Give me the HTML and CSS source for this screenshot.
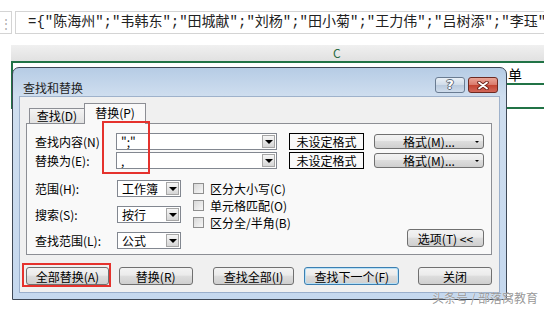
FILE: index.html
```html
<!DOCTYPE html>
<html lang="zh-CN">
<head>
    <meta charset="UTF-8">
    <meta name="viewport" content="width=device-width, initial-scale=1.0">
    <title>查找和替换</title>
    <link rel="stylesheet" href="styles.css">
</head>
<body>
    <!-- 编辑栏 -->
    <div class="formula-row">
        <div class="name-box">⋮</div>
        <div class="formula-box">={"陈海州";"韦韩东";"田城献";"刘杨";"田小菊";"王力伟";"吕树添";"李珏"}</div>
    </div>

    <div class="col-header"><span class="col-c">C</span></div>

    <div class="sheet">
        <div class="sheet-row first"><span class="cell-text">单</span></div>
        <div class="sheet-row second"></div>

        <!-- 对话框 -->
        <div class="dialog">
            <div class="title-bar">
                <span class="title">查找和替换</span>
                <div class="title-btns">
                    <button class="tb-btn help">?</button>
                    <button class="tb-btn close">
                        <svg width="12" height="9" viewBox="0 0 12 9">
                            <path d="M2 1.5 L10 7.5 M10 1.5 L2 7.5" stroke="#6b2118" stroke-width="3.6" stroke-linecap="round"/>
                            <path d="M2 1.5 L10 7.5 M10 1.5 L2 7.5" stroke="#fff" stroke-width="1.8" stroke-linecap="round"/>
                        </svg>
                    </button>
                </div>
            </div>

            <div class="client">
                <div class="tabs">
                    <div class="tab">查找(D)</div>
                    <div class="tab active">替换(P)</div>
                </div>

                <div class="panel">
                    <div class="field-row">
                        <label class="field-label">查找内容(N)</label>
                        <div class="combo wide"><span class="combo-text">";"</span><span class="drop"></span></div>
                        <div class="fmt-state">未设定格式</div>
                        <div class="btn fmt-btn">格式(M)...<span class="mini-drop"></span></div>
                    </div>
                    <div class="field-row">
                        <label class="field-label">替换为(E):</label>
                        <div class="combo wide"><span class="combo-text">,</span><span class="drop"></span></div>
                        <div class="fmt-state">未设定格式</div>
                        <div class="btn fmt-btn">格式(M)...<span class="mini-drop"></span></div>
                    </div>

                    <div class="options">
                        <div class="opt-grid">
                            <label>范围(H):</label>
                            <div class="combo small"><span class="combo-text">工作簿</span><span class="drop"></span></div>
                            <label>搜索(S):</label>
                            <div class="combo small"><span class="combo-text">按行</span><span class="drop"></span></div>
                            <label>查找范围(L):</label>
                            <div class="combo small"><span class="combo-text">公式</span><span class="drop"></span></div>
                        </div>
                        <div class="checks">
                            <div class="check"><span class="box"></span>区分大小写(C)</div>
                            <div class="check"><span class="box"></span>单元格匹配(O)</div>
                            <div class="check"><span class="box"></span>区分全/半角(B)</div>
                        </div>
                        <div class="btn opt-btn">选项(T) &lt;&lt;</div>
                    </div>
                </div>

                <div class="actions">
                    <div class="btn act-all">全部替换(A)</div>
                    <div class="btn act-replace">替换(R)</div>
                    <div class="btn act-findall">查找全部(I)</div>
                    <div class="btn act-next default">查找下一个(F)</div>
                    <div class="btn act-close">关闭</div>
                </div>
            </div>

            <div class="mark mark-find"></div>
            <div class="mark mark-all"></div>
        </div>

        <div class="watermark">头条号 / 部落窝教育</div>
    </div>
</body>
</html>
```

FILE: styles.css
```css
body {
    margin: 0;
    width: 544px;
    height: 309px;
    overflow: hidden;
    background: #fff;
    font-family: "Noto Sans CJK SC", sans-serif;
    color: #000;
}

/* 编辑栏 */
.formula-row {
    display: flex;
    gap: 3px;
    height: 45px;
    padding-top: 11px;
    box-sizing: border-box;
    align-items: flex-start;
}

.name-box {
    width: 12px;
    height: 23px;
    box-sizing: border-box;
    border: 1px solid #d4d4d4;
    border-left: none;
    color: #aaa;
    font-size: 12px;
    line-height: 21px;
    text-align: center;
}

.formula-box {
    flex: 1;
    height: 23px;
    box-sizing: border-box;
    border: 1px solid #d4d4d4;
    border-right: none;
    padding-left: 12px;
    font-family: "Liberation Mono", "Noto Sans CJK SC", monospace;
    font-size: 14px;
    line-height: 21px;
    white-space: nowrap;
    overflow: hidden;
    color: #222;
}

.col-header {
    margin-left: 11px;
    height: 16px;
    background: linear-gradient(#f0f0f0, #e1e1e1);
    border-bottom: 2px solid #217346;
    font-size: 12px;
    line-height: 16px;
}

.col-c {
    margin-left: 322px;
    color: #2a6b44;
}

/* 工作表 */
.sheet {
    position: relative;
    height: 246px;
}

.sheet-row {
    margin-left: 11px;
    border-left: 2px solid #217346;
    border-bottom: 2px solid #217346;
    display: flex;
    justify-content: flex-end;
    align-items: flex-end;
}

.sheet-row.first {
    height: 20px;
}

.sheet-row.second {
    height: 22px;
}

.cell-text {
    margin-right: 22px;
    font-size: 14px;
    line-height: 17px;
}

/* 对话框 */
.dialog {
    position: absolute;
    left: 12px;
    top: 4px;
    width: 495px;
    height: 233px;
    box-sizing: border-box;
    border: 1px solid #3e4856;
    border-radius: 7px 7px 0 0;
    background: linear-gradient(#b6cce5, #cfdeef 28px, #c5d8ee);
    display: flex;
    flex-direction: column;
}

.title-bar {
    height: 29px;
    display: flex;
    align-items: flex-start;
    padding: 9px 8px 0 10px;
    box-sizing: border-box;
}

.title {
    margin-top: 3px;
    font-size: 12px;
    line-height: 16px;
    color: #1e1e1e;
}

.title-btns {
    margin-left: auto;
    display: flex;
    gap: 3px;
}

.tb-btn {
    width: 30px;
    height: 16px;
    padding: 0;
    border-radius: 3px;
    display: flex;
    align-items: center;
    justify-content: center;
}

.tb-btn.help {
    border: 1px solid #6a7c92;
    background: linear-gradient(#e9f0f7, #d0dce9 50%, #b9cadd 50%, #cfdcec);
    color: #fff;
    font-family: "DejaVu Sans", sans-serif;
    font-size: 13px;
    font-weight: bold;
    line-height: 14px;
    text-shadow: 1px 0 #5e6a78, -1px 0 #5e6a78, 0 1px #5e6a78, 0 -1px #5e6a78;
}

.tb-btn.close {
    border: 1px solid #6d2a22;
    background: linear-gradient(#eaa597, #d9786a 50%, #c3422f 50%, #d2675a);
}

.client {
    flex: 1;
    margin: 0 7px 7px 7px;
    padding: 6px 7px 0 6px;
    background: #f0f0f0;
    box-shadow: 0 0 0 1px rgba(100, 125, 160, 0.45);
    font-size: 12px;
}

/* 选项卡 */
.tabs {
    display: flex;
    align-items: flex-end;
    height: 20px;
    padding-left: 3px;
}

.tab {
    width: 56px;
    height: 15px;
    box-sizing: border-box;
    border: 1px solid #8c8e94;
    border-bottom: none;
    background: linear-gradient(#f4f4f4, #e2e2e2);
    text-align: center;
    line-height: 14px;
}

.tab.active {
    width: 62px;
    height: 21px;
    margin-left: -1px;
    margin-bottom: -1px;
    position: relative;
    background: #f9f9f9;
    line-height: 17px;
}

.panel {
    height: 132px;
    box-sizing: border-box;
    border: 1px solid #8c8e94;
    background: #f9f9f9;
    padding: 9px 7px 0 8px;
}

.field-row {
    display: flex;
    align-items: center;
    height: 17px;
}

.field-row + .field-row {
    margin-top: 2px;
}

.field-label {
    width: 81px;
}

.combo {
    height: 17px;
    box-sizing: border-box;
    border: 1px solid #828790;
    background: #fff;
    display: flex;
    padding: 1px;
}

.combo.wide {
    width: 161px;
}

.combo.small {
    width: 64px;
}

.combo-text {
    flex: 1;
    padding-left: 3px;
    line-height: 13px;
}

.drop {
    width: 13px;
    box-sizing: border-box;
    border: 1px solid #a6a6a6;
    background: linear-gradient(#f6f6f6, #d6d6d6);
    display: flex;
    align-items: center;
    justify-content: center;
}

.drop::after {
    content: "";
    border-left: 4px solid transparent;
    border-right: 4px solid transparent;
    border-top: 4px solid #000;
}

.fmt-state {
    margin-left: 12px;
    width: 75px;
    height: 17px;
    box-sizing: border-box;
    border: 1px solid #000;
    text-align: center;
    line-height: 15px;
}

.btn {
    box-sizing: border-box;
    border: 1px solid #707070;
    border-radius: 3px;
    background: linear-gradient(#f3f3f3, #ebebeb 45%, #dddddd 50%, #cfcfcf);
    display: flex;
    align-items: center;
    justify-content: center;
    font-size: 12px;
}

.fmt-btn {
    margin-left: 10px;
    width: 110px;
    height: 15px;
    position: relative;
}

.mini-drop {
    position: absolute;
    right: 4px;
    top: 6px;
    border-left: 2px solid transparent;
    border-right: 2px solid transparent;
    border-top: 2px solid #000;
}

/* 选项 */
.options {
    display: flex;
    margin-top: 11px;
    height: 69px;
}

.opt-grid {
    display: grid;
    grid-template-columns: 82px 64px;
    grid-auto-rows: 17px;
    row-gap: 9px;
    align-items: center;
}

.checks {
    margin-left: 12px;
    display: flex;
    flex-direction: column;
}

.check {
    height: 17px;
    display: flex;
    align-items: center;
    gap: 6px;
}

.box {
    width: 11px;
    height: 11px;
    box-sizing: border-box;
    border: 1px solid #8f8f8f;
    background: linear-gradient(135deg, #d8d8d8, #f7f7f7);
}

.opt-btn {
    margin-left: auto;
    align-self: flex-end;
    margin-bottom: 2px;
    width: 77px;
    height: 18px;
}

/* 底部按钮 */
.actions {
    display: flex;
    margin-top: 12px;
    height: 18px;
}

.act-all {
    width: 83px;
}

.act-replace {
    width: 74px;
    margin-left: 10px;
}

.act-findall {
    width: 82px;
    margin-left: 20px;
}

.act-next {
    width: 95px;
    margin-left: 10px;
}

.act-close {
    width: 74px;
    margin-left: 19px;
}

.btn.default {
    border-color: #3c7fb1;
    box-shadow: inset 0 0 0 1px #b6e0f7;
}

/* 红框标注 */
.mark {
    position: absolute;
    box-sizing: border-box;
    border: 2px solid #e5322d;
}

.mark-find {
    left: 89px;
    top: 53px;
    width: 48px;
    height: 53px;
}

.mark-all {
    left: 9px;
    top: 195px;
    width: 89px;
    height: 24px;
}

.watermark {
    position: absolute;
    left: 432px;
    top: 228px;
    font-size: 12px;
    line-height: 14px;
    color: rgba(140, 140, 140, 0.9);
    text-shadow: 0 0 1px #fff;
}
```
